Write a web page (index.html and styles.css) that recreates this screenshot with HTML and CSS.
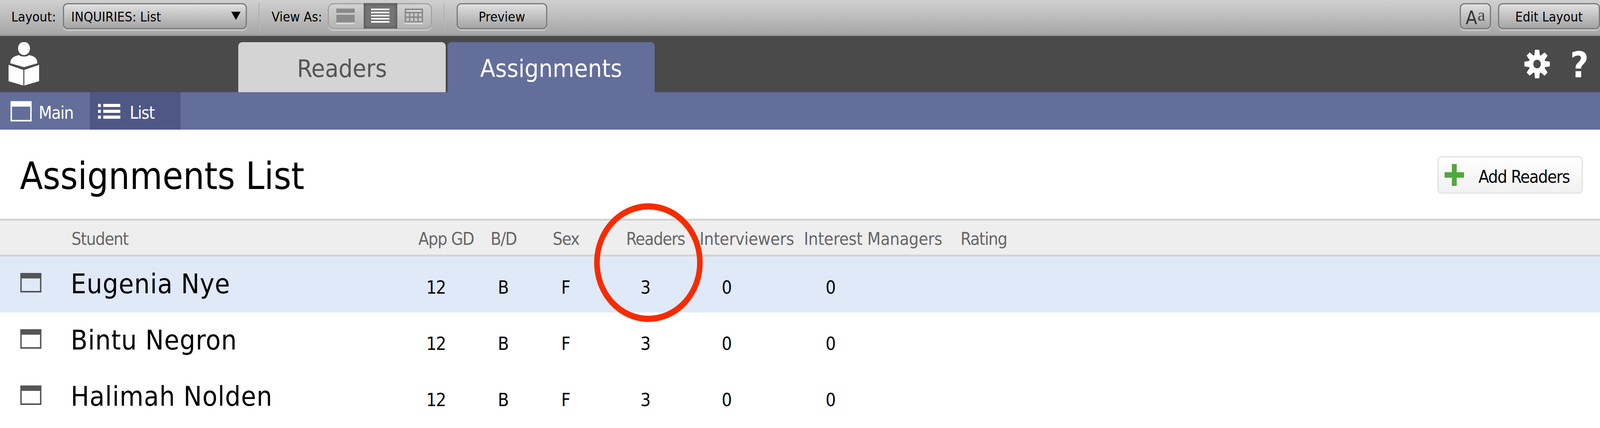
FILE: index.html
```html
<!DOCTYPE html>
<html lang="en">
<head>
<meta charset="utf-8">
<title>Assignments List</title>
<link rel="stylesheet" href="styles.css">
</head>
<body>
<div class="page">
  <div class="toolbar">
    <span class="tb-label tb-layout">Layout:</span>
    <div class="btn select"><span class="select-text">INQUIRIES: List</span><svg class="arrow" viewBox="0 0 27 21" preserveAspectRatio="none"><path d="M0 0H27L13.500 21Z"/></svg></div>
    <div class="sep"></div>
    <span class="tb-label">View As:</span>
    <div class="segs">
      <div class="seg seg-l">
        <svg class="view-icon" viewBox="0 0 52 40" preserveAspectRatio="none"><rect width="52" height="11" fill="#8a8a8a"/><rect y="16" width="52" height="19" fill="#8a8a8a"/><rect y="37" width="52" height="3" fill="#dedede"/></svg>
      </div>
      <div class="seg seg-on">
        <svg class="view-icon" viewBox="0 0 52 40" preserveAspectRatio="none"><g fill="#fff"><rect width="52" height="4"/><rect y="8" width="52" height="4"/><rect y="16" width="52" height="4"/><rect y="24" width="52" height="4"/><rect y="32" width="52" height="4"/></g></svg>
      </div>
      <div class="seg seg-r">
        <svg class="view-icon" viewBox="0 0 52 40" preserveAspectRatio="none"><rect width="52" height="35" fill="#8a8a8a"/><rect x="4" y="4" width="44" height="4" fill="#dedede"/><g fill="#c8c8c8"><rect x="4" y="12" width="8" height="8"/><rect x="16" y="12" width="8" height="8"/><rect x="28" y="12" width="8" height="8"/><rect x="40" y="12" width="8" height="8"/><rect x="4" y="24" width="8" height="8"/><rect x="16" y="24" width="8" height="8"/><rect x="28" y="24" width="8" height="8"/><rect x="40" y="24" width="8" height="8"/></g><rect y="37" width="52" height="3" fill="#dedede"/></svg>
      </div>
    </div>
    <div class="sep"></div>
    <div class="btn preview">Preview</div>
    <div class="btn aa"><span class="aa-big">A</span><span class="aa-small">a</span></div>
    <div class="btn edit">Edit Layout</div>
  </div>

  <div class="darkbar">
    <svg class="logo" viewBox="0 0 89 112" preserveAspectRatio="none"><g fill="#fff"><ellipse cx="45" cy="16" rx="17" ry="17"/><path d="M6 54C6 43 13 38 22 35L31 33C36 38 54 38 59 33L68 35C77 38 83 43 83 54L45 64Z"/><path d="M1 58L43 71V111L1 100Z"/><path d="M46 71L88 58V100L46 111Z"/></g></svg>
    <div class="tab tab-off">Readers</div>
    <div class="tab tab-on">Assignments</div>
    <svg class="gear" viewBox="-37 -37 74 74" preserveAspectRatio="none"><circle r="17.500" fill="none" stroke="#fff" stroke-width="13"/><g fill="#fff"><path d="M-6 -36.500H6L8 -22H-8Z"/><path d="M-6 -36.500H6L8 -22H-8Z" transform="rotate(45)"/><path d="M-6 -36.500H6L8 -22H-8Z" transform="rotate(90)"/><path d="M-6 -36.500H6L8 -22H-8Z" transform="rotate(135)"/><path d="M-6 -36.500H6L8 -22H-8Z" transform="rotate(180)"/><path d="M-6 -36.500H6L8 -22H-8Z" transform="rotate(225)"/><path d="M-6 -36.500H6L8 -22H-8Z" transform="rotate(270)"/><path d="M-6 -36.500H6L8 -22H-8Z" transform="rotate(315)"/></g></svg>
    <span class="help">?</span>
  </div>

  <div class="navbar">
    <div class="nav-item nav-main">
      <svg class="nav-win" viewBox="0 0 60 52" preserveAspectRatio="none"><path fill="#fff" d="M0 0H60V52H0ZM4 14V48H56V14Z" fill-rule="evenodd"/></svg>
      <span class="nav-text">Main</span>
    </div>
    <div class="nav-item nav-list">
      <svg class="nav-lines" viewBox="0 0 64 38" preserveAspectRatio="none"><g fill="#fff"><rect width="8" height="8"/><rect x="15" width="49" height="8"/><rect y="15" width="8" height="8"/><rect x="15" y="15" width="49" height="8"/><rect y="30" width="8" height="8"/><rect x="15" y="30" width="49" height="8"/></g></svg>
      <span class="nav-text">List</span>
    </div>
  </div>

  <div class="titlebar">
    <h1>Assignments List</h1>
    <div class="add">
      <svg class="plus" viewBox="0 0 56 56" preserveAspectRatio="none"><path fill="#52a83c" d="M21 0H35V21H56V35H35V56H21V35H0V21H21Z"/></svg>
      <span class="add-text">Add Readers</span>
    </div>
  </div>

  <div class="thead">
    <span>Student</span><span>App GD</span><span>B/D</span><span>Sex</span><span>Readers</span><span class="th-wide">Interviewers</span><span class="th-wide">Interest Managers</span><span>Rating</span>
  </div>

  <div class="row row-on">
    <svg class="row-win" viewBox="0 0 60 50" preserveAspectRatio="none"><path fill="#555" fill-rule="evenodd" d="M0 0H60V50H0ZM4 14V46H56V14Z"/></svg>
    <span class="name">Eugenia Nye</span><span class="val">12</span><span class="val">B</span><span class="val">F</span><span class="val">3</span><span class="val">0</span><span class="val">0</span>
  </div>
  <div class="row">
    <svg class="row-win" viewBox="0 0 60 50" preserveAspectRatio="none"><path fill="#555" fill-rule="evenodd" d="M0 0H60V50H0ZM4 14V46H56V14Z"/></svg>
    <span class="name">Bintu Negron</span><span class="val">12</span><span class="val">B</span><span class="val">F</span><span class="val">3</span><span class="val">0</span><span class="val">0</span>
  </div>
  <div class="row">
    <svg class="row-win" viewBox="0 0 60 50" preserveAspectRatio="none"><path fill="#555" fill-rule="evenodd" d="M0 0H60V50H0ZM4 14V46H56V14Z"/></svg>
    <span class="name">Halimah Nolden</span><span class="val">12</span><span class="val">B</span><span class="val">F</span><span class="val">3</span><span class="val">0</span><span class="val">0</span>
  </div>

  <svg class="circle" viewBox="0 0 310 305" preserveAspectRatio="none"><ellipse cx="155" cy="152.500" rx="147" ry="144" fill="none" stroke="#f62b00" stroke-width="16"/></svg>
</div>
</body>
</html>
```

FILE: styles.css
```css
* { box-sizing: border-box; }
html, body { margin: 0; padding: 0; background: #fff; }
body { font-family: "DejaVu Sans Condensed", "DejaVu Sans", "Liberation Sans", sans-serif; font-stretch: condensed; color: #000; }
.page { position: relative; width: 100%; height: 1096px; overflow: hidden; }

/* toolbar */
.toolbar { display: flex; align-items: flex-start; height: 92px; padding-top: 8px; background: linear-gradient(#d0d0d0, #a9a9a9 95%); border-bottom: 4px solid #9c9c9c; font-size: 34px; white-space: nowrap; }
.tb-label { height: 66px; line-height: 70px; }
.tb-layout { margin-left: 29px; }
.btn { height: 67px; line-height: 65px; border: 3px solid #7b7b7b; border-radius: 12px; background: linear-gradient(#e0e0e0, #a4a4a4); box-shadow: 0 4px 0 #cbcbcb; text-align: center; }
.select { display: flex; justify-content: space-between; align-items: center; width: 471px; margin-left: 18px; padding: 0 13px 0 18px; }
.select-text { padding-top: 3px; }
.arrow { width: 24px; height: 21px; fill: #000; margin-top: -2px; }
.sep { width: 3px; height: 72px; margin: 0 30px; background: #aaa; border-right: 1px solid #c6c6c6; }
.segs { display: flex; margin-left: 14px; width: 267px; height: 67px; border: 3px solid #a2a2a2; border-radius: 15px; background: linear-gradient(#d2d2d2, #b4b4b4); box-shadow: 0 4px 0 #cbcbcb; }
.seg { display: flex; justify-content: center; margin-top: -3px; height: 67px; padding-top: 14px; }
.seg-l { width: 92px; margin-left: -3px; }
.seg-on { width: 86px; height: 65px; background: #757575; box-shadow: inset 0 0 10px #444; }
.seg-r { width: 86px; }
.view-icon { width: 47px; height: 40px; }
.preview { width: 232px; }
.aa { display: flex; justify-content: center; width: 80px; margin-left: auto; }
.aa-big { font-size: 48px; line-height: 68px; color: #333; }
.aa-small { font-family: "Liberation Serif", serif; font-size: 44px; line-height: 55px; color: #444; margin-left: 1px; }
.edit { width: 261px; margin-left: 18px; }

/* dark bar */
.darkbar { display: flex; align-items: flex-end; height: 144px; background: #4a4a4a; padding-left: 21px; }
.logo { width: 80px; height: 112px; align-self: flex-start; margin-top: 16px; margin-right: 509px; }
.tab { height: 128px; border-radius: 10px 10px 0 0; text-align: center; font-size: 63px; line-height: 136px; }
.tab-off { width: 531px; background: #d4d4d4; color: #555; margin-right: 5px; }
.tab-on { width: 530px; background: #636e9a; color: #fff; }
.gear { width: 66px; height: 74px; align-self: flex-start; margin-top: 35px; margin-left: auto; }
.help { align-self: flex-start; margin: 25px 29px 0 52px; font-size: 91px; line-height: 100px; font-weight: 700; color: #fff; }

/* nav bar */
.navbar { display: flex; height: 96px; background: #636e9a; color: #fff; font-size: 44px; letter-spacing: -1.500px; }
.nav-item { display: flex; align-items: center; height: 96px; }
.nav-main { width: 230px; padding-left: 27px; }
.nav-list { width: 232px; padding-left: 21px; background: #4f5784; }
.nav-win { width: 54px; height: 52px; margin-right: 18px; margin-top: 2px; }
.nav-lines { width: 57px; height: 38px; margin-right: 24px; margin-top: 1px; }
.nav-text { padding-top: 8px; }

/* title */
.titlebar { display: flex; align-items: center; justify-content: space-between; height: 228px; padding: 4px 44px 0 51px; }
h1 { margin: 6px 0 0; font-size: 95.500px; line-height: 110px; font-weight: 400; }
.add { display: flex; align-items: center; width: 372px; height: 96px; padding-left: 15px; border: 3px solid #e2e2e2; border-radius: 10px; background: linear-gradient(#fff, #f1f1f1); font-size: 44px; letter-spacing: -1.500px; }
.plus { width: 50px; height: 56px; margin-right: 37px; }
.add-text { padding-top: 8px; }

/* table */
.thead { display: grid; grid-template-columns: 888px 185px 159px 188px 188px 267px 401px 200px; height: 97px; padding: 8px 0 0 183px; border-top: 5px solid #d4d4d4; border-bottom: 5px solid #d4d4d4; background: #eee; color: #666; font-size: 44px; letter-spacing: -1.500px; line-height: 78px; white-space: nowrap; }
.th-wide { letter-spacing: -0.300px; }
.row { display: grid; grid-template-columns: 129px 845px 180px 164px 156px 252px 164px 368px; height: 144px; padding-left: 52px; align-items: start; }
.row-on { background: #dfe9f8; height: 143px; margin-bottom: 1px; }
.row-win { width: 54px; height: 50px; margin-top: 42px; }
.name { font-size: 70px; letter-spacing: 1px; line-height: 80px; margin-top: 30px; white-space: nowrap; }
.val { font-size: 46px; letter-spacing: -1.500px; line-height: 60px; margin-top: 49px; text-align: center; }

/* annotation */
.circle { position: absolute; left: 1521px; top: 520px; width: 278px; height: 305px; }
```
